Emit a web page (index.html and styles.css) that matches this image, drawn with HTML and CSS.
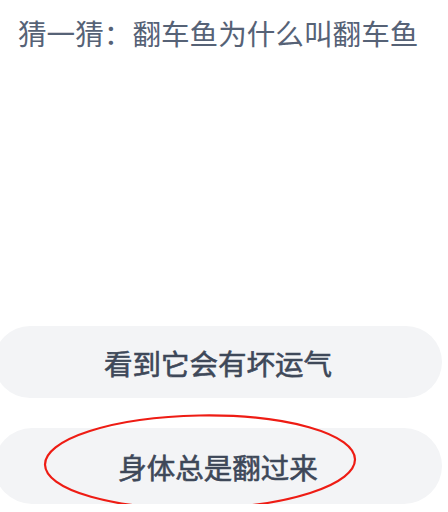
FILE: index.html
```html
<!DOCTYPE html>
<html lang="zh-CN">
<head>
    <meta charset="UTF-8">
    <meta name="viewport" content="width=device-width, initial-scale=1.0">
    <title>猜一猜</title>
    <link rel="stylesheet" href="styles.css">
</head>
<body>
    <h1 class="question">猜一猜：翻车鱼为什么叫翻车鱼</h1>
    <div class="options">
        <div class="option">看到它会有坏运气</div>
        <div class="option option-answer">
            身体总是翻过来
            <svg class="circle" width="316" height="98" viewBox="0 0 316 98">
                <ellipse cx="158" cy="49" rx="155" ry="46.5" fill="none" stroke="#ee1c14" stroke-width="2.2" transform="rotate(-1 158 49)"/>
            </svg>
        </div>
    </div>
</body>
</html>
```

FILE: styles.css
```css
body {
    margin: 0;
    background-color: #fff;
    font-family: "Noto Sans CJK SC", "Noto Sans", sans-serif;
    overflow: hidden;
}
.question {
    margin: 0;
    padding: 15px 0 0 18px;
    font-size: 28.6px;
    font-weight: 400;
    line-height: 36px;
    color: #566276;
    white-space: nowrap;
}
.options {
    display: flex;
    flex-direction: column;
    gap: 30px;
    width: 448px;
    margin: 275px 0 0 -6px;
}
.option {
    position: relative;
    height: 72px;
    border-radius: 36px;
    background-color: #f3f4f6;
    display: flex;
    align-items: center;
    justify-content: center;
    font-size: 28.5px;
    font-weight: 400;
    -webkit-text-stroke: 0.6px #3e4859;
    color: #3e4859;
}
.option-answer {
    height: 76px;
    border-radius: 38px;
}
.circle {
    position: absolute;
    left: 48px;
    top: -15px;
}
```
